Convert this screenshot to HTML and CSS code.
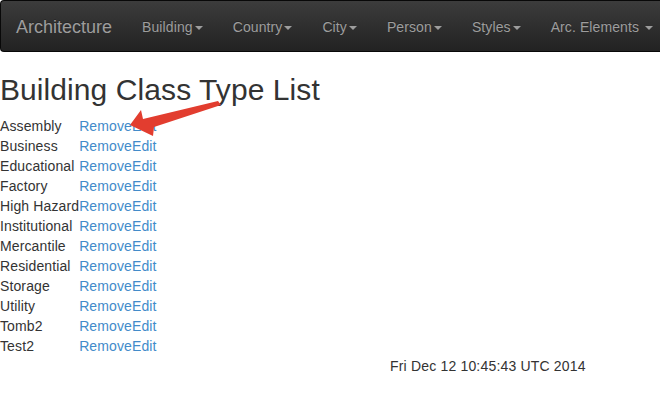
FILE: index.html
```html
<!DOCTYPE html>
<html lang="en">
<head>
<meta charset="utf-8">
<title>Building Class Type List</title>
<link rel="stylesheet" href="styles.css">
</head>
<body>
<nav class="navbar">
  <a class="brand" href="#">Architecture</a>
  <ul class="nav">
    <li><a href="#">Building<span class="caret"></span></a></li>
    <li><a href="#">Country<span class="caret"></span></a></li>
    <li><a href="#">City<span class="caret"></span></a></li>
    <li><a href="#">Person<span class="caret"></span></a></li>
    <li><a href="#">Styles<span class="caret"></span></a></li>
    <li><a href="#">Arc. Elements <span class="caret"></span></a></li>
  </ul>
</nav>
<main class="content">
  <h2 class="title">Building Class Type List</h2>
  <table class="list">
    <tr><td>Assembly</td><td><a href="#">Remove</a><a href="#">Edit</a></td></tr>
    <tr><td>Business</td><td><a href="#">Remove</a><a href="#">Edit</a></td></tr>
    <tr><td>Educational</td><td><a href="#">Remove</a><a href="#">Edit</a></td></tr>
    <tr><td>Factory</td><td><a href="#">Remove</a><a href="#">Edit</a></td></tr>
    <tr><td>High Hazard</td><td><a href="#">Remove</a><a href="#">Edit</a></td></tr>
    <tr><td>Institutional</td><td><a href="#">Remove</a><a href="#">Edit</a></td></tr>
    <tr><td>Mercantile</td><td><a href="#">Remove</a><a href="#">Edit</a></td></tr>
    <tr><td>Residential</td><td><a href="#">Remove</a><a href="#">Edit</a></td></tr>
    <tr><td>Storage</td><td><a href="#">Remove</a><a href="#">Edit</a></td></tr>
    <tr><td>Utility</td><td><a href="#">Remove</a><a href="#">Edit</a></td></tr>
    <tr><td>Tomb2</td><td><a href="#">Remove</a><a href="#">Edit</a></td></tr>
    <tr><td>Test2</td><td><a href="#">Remove</a><a href="#">Edit</a></td></tr>
  </table>
  <div class="stamp">Fri Dec 12 10:45:43 UTC 2014</div>
</main>
<svg class="annotation" width="660" height="418" viewBox="0 0 660 418" aria-hidden="true">
  <polygon class="arrow" points="130,125 141,110 143,119 218,101 221,105 154,127 153,136"/>
</svg>
</body>
</html>
```

FILE: styles.css
```css
html, body {
  margin: 0;
  padding: 0;
}
body {
  font-family: "Liberation Sans", Arial, Helvetica, sans-serif;
  font-size: 14px;
  line-height: 20px;
  color: #333;
  background: #fff;
  position: relative;
  overflow: hidden;
}
a {
  color: #428bca;
  text-decoration: none;
}
.navbar {
  display: flex;
  align-items: stretch;
  height: 50px;
  border: 1px solid #080808;
  border-right: 0;
  border-radius: 4px 0 0 4px;
  background: linear-gradient(to bottom, #3c3c3c 0%, #222 100%);
  margin-bottom: 21px;
}
.brand {
  display: block;
  padding: 16px 15px 14px;
  font-size: 18px;
  line-height: 20px;
  color: #9d9d9d;
  text-shadow: 0 -1px 0 rgba(0,0,0,.25);
}
.nav {
  display: flex;
  list-style: none;
  margin: 0;
  padding: 0;
}
.nav a {
  display: block;
  padding: 16px 15px 14px;
  line-height: 20px;
  color: #9d9d9d;
  text-shadow: 0 -1px 0 rgba(0,0,0,.25);
  white-space: nowrap;
  letter-spacing: 0.1px;
}
.caret {
  display: inline-block;
  width: 0;
  height: 0;
  margin-left: 2px;
  vertical-align: middle;
  border-top: 4px solid;
  border-right: 4px solid transparent;
  border-left: 4px solid transparent;
}
.content {
  padding: 0;
  letter-spacing: 0.12px;
}
.title {
  margin: 20px 0 10px;
  font-size: 30px;
  font-weight: 500;
  line-height: 33px;
  color: #333;
  letter-spacing: 0.08px;
}
.list {
  border-collapse: collapse;
  border-spacing: 0;
}
.list td {
  padding: 0;
  line-height: 20px;
  white-space: nowrap;
}
.stamp {
  padding-left: 390px;
  line-height: 20px;
  letter-spacing: 0.18px;
}
.annotation {
  position: absolute;
  left: 0;
  top: 0;
  pointer-events: none;
}
.arrow {
  fill: #e23d2f;
}
```
